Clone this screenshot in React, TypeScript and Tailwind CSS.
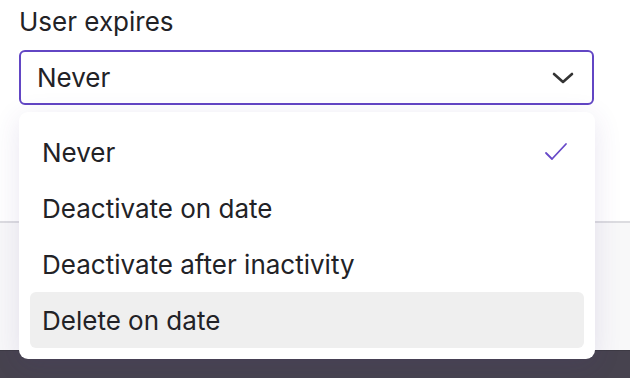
import React from "react";

const items = ["Never", "Deactivate on date", "Deactivate after inactivity", "Delete on date"];

export default function App() {
  return (
    <div className="relative w-[630px] h-[378px] overflow-hidden bg-white text-[#222226]" style={{ fontFamily: "Inter, 'Noto Sans', sans-serif" }}>
      <div className="flex flex-col h-full">
        <div className="pl-[19px] pr-[36px] pt-[5px] h-[221px] bg-white">
          <div className="text-[26px] leading-[34px]">User expires</div>
          <div className="mt-[11px] h-[55px] rounded-[6px] border-2 border-[#6246c4] flex items-center justify-between pl-[16px] pr-[18px]">
            <span className="text-[26px]">Never</span>
            <svg width="22" height="12" viewBox="0 0 22 12" fill="none">
              <path d="M2 2 L11 10 L20 2" stroke="#333" strokeWidth="2.6" strokeLinecap="round" strokeLinejoin="round" />
            </svg>
          </div>
        </div>
        <div className="h-[129px] border-t-2 border-[#dcdce0] bg-[#f8f8f9]" />
        <div className="flex-1 bg-[#47434f] border-t border-[#3d3a44]" />
      </div>

      <div className="absolute left-[19px] top-[112px] w-[576px] h-[247px] bg-white rounded-[9px] shadow-[0_6px_28px_rgba(70,50,140,0.12)] px-[11px] pt-[12px]">
        {items.map((it, i) => (
          <div
            key={it}
            className={`h-[56px] flex items-center justify-between pl-[12px] pr-[16px] rounded-[6px] text-[26px] ${i === 3 ? "bg-[#efefef]" : ""}`}
          >
            <span>{it}</span>
            {i === 0 && (
              <svg width="24" height="20" viewBox="0 0 24 20" fill="none">
                <path d="M2 11 L8 17 L22 2" stroke="#6749c8" strokeWidth="1.8" strokeLinecap="round" strokeLinejoin="round" />
              </svg>
            )}
          </div>
        ))}
      </div>
    </div>
  );
}
